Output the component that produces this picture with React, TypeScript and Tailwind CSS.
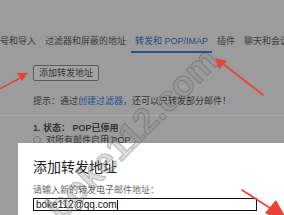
import React from 'react';

// ── Tabs ───────────────────────────────────────────────────────────────────────
const TABS = [
  { label: '帐号和导入', active: false },
  { label: '过滤器和屏蔽的地址', active: false },
  { label: '转发和 POP/IMAP', active: true },
  { label: '插件', active: false },
  { label: '聊天和会议', active: false },
];

export default function App() {
  return (
    <div
      className="relative w-[284px] h-[215px] overflow-hidden bg-[#9d9c9d] text-[#333]"
      style={{ fontFamily: '"Liberation Sans", "Noto Sans CJK SC", sans-serif' }}
    >
      {/* ── Settings page (dimmed) ── */}
      <div className="flex flex-col pt-[35px]">
        <div className="flex gap-[1px] ml-[-13px] whitespace-nowrap text-[9px] leading-[12px]">
          {TABS.map(t => (
            <div
              key={t.label}
              className={`px-[4px] pb-[4px] border-b-2 ${
                t.active ? 'border-[#2d5189] text-[#254c86]' : 'border-transparent text-[#3a3a3a]'
              }`}
            >
              {t.label}
            </div>
          ))}
        </div>

        <div className="pl-[33px] mt-[6px]">
          <button className="h-[16px] px-[5px] border border-[#5a5a5a] rounded-[2px] bg-[#a3a2a3] text-[9px] leading-[14px] text-[#333]">
            添加转发地址
          </button>
        </div>

        <p className="pl-[33px] mt-[12px] text-[9px] leading-[12px] whitespace-nowrap">
          提示：通过<span className="text-[#244f93]">创建过滤器</span>，还可以只转发部分邮件！
        </p>

        <div className="mt-[8px] border-t border-[#adacad]" />

        <div className="pl-[33px] mt-[6px] text-[9px] leading-[12px] whitespace-nowrap">
          <p className="font-bold">1. 状态： POP已停用</p>
          <div className="flex items-center gap-[5px]">
            <span className="w-[8px] h-[8px] rounded-full border border-[#777]" />
            <span>对所有邮件启用 POP</span>
          </div>
          <div className="flex items-center gap-[5px]">
            <span className="w-[8px] h-[8px] rounded-full border border-[#777]" />
            <span>对从现在起收到的邮件启用 POP</span>
          </div>
        </div>
      </div>

      {/* ── Dialog ── */}
      <div className="absolute left-[18px] top-[143px] right-0 bottom-0 bg-white pl-[15px] pt-[14px]">
        <h2 className="text-[14px] leading-[20px] text-[#222]">添加转发地址</h2>
        <p className="mt-[7px] text-[9px] leading-[12px] text-[#666]">请输入新的转发电子邮件地址：</p>
        <div className="mt-[2px] w-[224px] h-[13px] border border-[#111] flex items-center px-[2px] text-[10px] leading-[11px] text-[#111]">
          boke112@qq.com<span className="w-px h-[10px] bg-black" />
        </div>
      </div>

      {/* ── Watermark ── */}
      <div className="absolute left-[132px] top-[134px] -translate-x-1/2 -translate-y-1/2 -rotate-45 whitespace-nowrap text-[36px] font-bold leading-none text-[#8c8c8c]/30 [-webkit-text-stroke:1px_rgba(70,70,70,0.35)]">
        boke112.com
      </div>

      {/* ── Red arrows ── */}
      <svg className="absolute inset-0 pointer-events-none" width="284" height="215" viewBox="0 0 284 215">
        <g fill="#ea4335" stroke="#ea4335" strokeLinecap="round">
          <line x1="-2" y1="90" x2="22" y2="77" strokeWidth="1.6" />
          <polygon points="28,73 17,73 22,81" stroke="none" />
          <line x1="263" y1="95" x2="222" y2="63" strokeWidth="1.6" />
          <polygon points="215,58 219,69 227,61" stroke="none" />
          <line x1="242" y1="190" x2="270" y2="208" strokeWidth="1.6" />
          <polygon points="290,225 265,213 276,200" stroke="none" />
        </g>
      </svg>
    </div>
  );
}
